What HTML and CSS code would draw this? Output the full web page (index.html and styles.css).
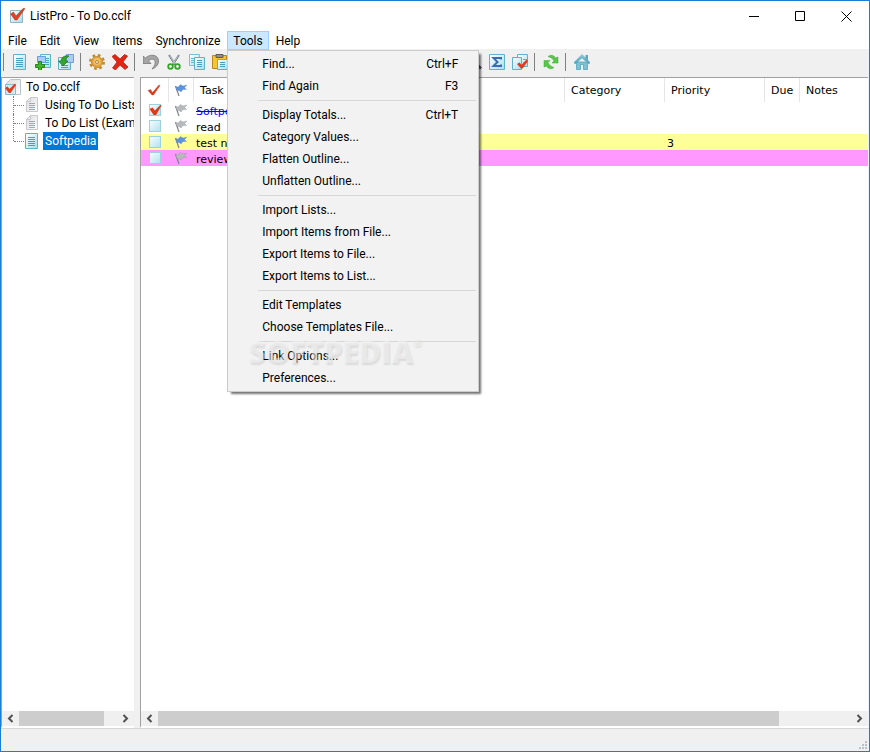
FILE: index.html
```html
<!DOCTYPE html>
<html lang="en">
<head>
  <meta charset="UTF-8">
  <title>ListPro - To Do.cclf</title>
  <link rel="stylesheet" href="styles.css">
</head>
<body>

  <!-- shared icon shapes -->
  <svg class="defs" aria-hidden="true">
    <defs>
      <linearGradient id="pageBlue" x1="0" y1="0" x2="1" y2="1">
        <stop offset="0" stop-color="#ffffff"/>
        <stop offset="1" stop-color="#a6dfee"/>
      </linearGradient>
      <linearGradient id="pageGrey" x1="0" y1="0" x2="1" y2="1">
        <stop offset="0" stop-color="#dcdcdc"/>
        <stop offset="1" stop-color="#fdfdfd"/>
      </linearGradient>
      <linearGradient id="roof" x1="0" y1="0" x2="0" y2="1">
        <stop offset="0" stop-color="#8ccbdc"/>
        <stop offset="1" stop-color="#4a9fba"/>
      </linearGradient>
      <symbol id="page" viewBox="0 0 16 16">
        <path d="M1.500.5h12v15h-12z" fill="url(#pageBlue)" stroke="#5db4c8"/>
        <path d="M4 4.500h7M4 6.500h7M4 8.500h7M4 10.500h7M4 12.500h7" stroke="#4a9fbc"/>
      </symbol>
      <symbol id="page-grey" viewBox="0 0 16 16">
        <path d="M6.500.5h7v14h-11v-10z" fill="url(#pageGrey)" stroke="#c8c8cc"/>
        <path d="M2.500 4.500h4v-4z" fill="#eee" stroke="#c8c8cc"/>
        <path d="M5 6.500h6M5 8.500h6M5 10.500h6M5 12.500h6" stroke="#9cabb0"/>
      </symbol>
      <symbol id="tick" viewBox="0 0 16 16">
        <path d="M2 8.500l2.500-1 2 3L13 3l1 .5L7.500 13H6z" fill="#e23a18" stroke="#b8391f" stroke-width=".4"/>
      </symbol>
      <symbol id="flag" viewBox="0 0 16 16">
        <path d="M2.500 4L6 14" stroke="#7f858c" stroke-width="1.200"/>
        <path d="M2.500 4.500L5 5 7.500 2.500 10 4 14 3 11.500 5.500l2 2L10 7.500l-2 2.500L6 8.500 4 9z" fill="currentColor" stroke="#5f7590" stroke-opacity=".4" stroke-width=".6"/>
      </symbol>
    </defs>
  </svg>

  <div class="window">

    <header class="titlebar">
      <svg class="icon" viewBox="0 0 16 16" aria-hidden="true">
        <path d="M1.500 2.500h12v12h-12z" fill="url(#pageBlue)" stroke="#8fb5c4"/>
        <path d="M1.500 6l3-2 2.500 4L14 .5h2L8 12H6z" fill="#e04420" stroke="#b53116" stroke-width=".5"/>
      </svg>
      <h1 class="title">ListPro - To Do.cclf</h1>
      <div class="controls">
        <button class="control" aria-label="Minimize"><svg viewBox="0 0 11 11"><path d="M0 5.500h10"/></svg></button>
        <button class="control" aria-label="Maximize"><svg viewBox="0 0 11 11"><path d="M.5.5h9v9h-9z"/></svg></button>
        <button class="control" aria-label="Close"><svg viewBox="0 0 11 11"><path d="M.5.5l10 10M10.500.5l-10 10"/></svg></button>
      </div>
    </header>

    <nav class="menubar">
      <button class="menu-btn">File</button>
      <button class="menu-btn">Edit</button>
      <button class="menu-btn">View</button>
      <button class="menu-btn">Items</button>
      <button class="menu-btn">Synchronize</button>
      <div class="menu-holder">
        <button class="menu-btn open" aria-expanded="true">Tools</button>
        <div class="dropdown" role="menu">
          <button class="entry" role="menuitem">Find...<span>Ctrl+F</span></button>
          <button class="entry" role="menuitem">Find Again<span>F3</span></button>
          <hr>
          <button class="entry" role="menuitem">Display Totals...<span>Ctrl+T</span></button>
          <button class="entry" role="menuitem">Category Values...</button>
          <button class="entry" role="menuitem">Flatten Outline...</button>
          <button class="entry" role="menuitem">Unflatten Outline...</button>
          <hr>
          <button class="entry" role="menuitem">Import Lists...</button>
          <button class="entry" role="menuitem">Import Items from File...</button>
          <button class="entry" role="menuitem">Export Items to File...</button>
          <button class="entry" role="menuitem">Export Items to List...</button>
          <hr>
          <button class="entry" role="menuitem">Edit Templates</button>
          <button class="entry" role="menuitem">Choose Templates File...</button>
          <hr>
          <button class="entry" role="menuitem">Link Options...</button>
          <button class="entry" role="menuitem">Preferences...</button>
          <div class="watermark">SOFTPEDIA<sup>®</sup></div>
        </div>
      </div>
      <button class="menu-btn">Help</button>
    </nav>

    <div class="toolbar">
      <span class="sep"></span>
      <button class="tool" aria-label="New list"><svg class="icon"><use href="#page"/></svg></button>
      <button class="tool" aria-label="Add item">
        <svg class="icon" viewBox="0 0 16 16">
          <path d="M5.500.5h10v13h-10z" fill="url(#pageBlue)" stroke="#5db4c8"/>
          <path d="M11 4.500h3M11 6.500h3M8 8.500h6M8 10.500h6" stroke="#4a9fbc"/>
          <path d="M2.500 2.500h8v6h-8z" fill="#a9cdf5" stroke="#6a9fd8"/>
          <path d="M3.500 7.500h3v3h3v3h-3v3h-3v-3h-3v-3h3z" fill="#3fb52b" stroke="#25831a"/>
        </svg>
      </button>
      <button class="tool" aria-label="Add sub item">
        <svg class="icon" viewBox="0 0 16 16">
          <path d="M.5 3.500h12v12H.5z" fill="url(#pageBlue)" stroke="#5db4c8"/>
          <path d="M3 11.500h7M3 13.500h7" stroke="#4a9fbc"/>
          <path d="M8.500.5h7v8h-7z" fill="#a9cdf5" stroke="#6a9fd8"/>
          <path d="M11 2C6 1 3 4 3 7H.5L5 12l5-5H7.500c0-2 1-3.500 3.500-5z" fill="#35a62a" stroke="#1b701a" stroke-width=".7"/>
        </svg>
      </button>
      <span class="sep"></span>
      <button class="tool" aria-label="Properties">
        <svg class="icon" viewBox="0 0 16 16">
          <circle cx="8" cy="8" r="6.500" fill="none" stroke="#c08a30" stroke-width="3" stroke-dasharray="2.600 2.500"/>
          <circle cx="8" cy="8" r="5.500" fill="#e2a63c" stroke="#c9903a"/>
          <circle cx="8" cy="7.500" r="3.500" fill="#f1c063"/>
          <circle cx="8" cy="8" r="1.500" fill="#f6efe0" stroke="#b98430"/>
        </svg>
      </button>
      <button class="tool" aria-label="Delete">
        <svg class="icon" viewBox="0 0 16 16"><path d="M0 2.500L3 .5l5 4.500L12.500.5l3 1.500L11 8l5 5-3 2.500-5-4.500-4.500 5L.5 14 5 8z" fill="#e62414" stroke="#ad160c" stroke-width=".7"/></svg>
      </button>
      <span class="sep"></span>
      <button class="tool" aria-label="Undo">
        <svg class="icon" viewBox="0 0 16 16"><path d="M0 2l2.500 2C7-.5 15.500.5 15.500 7c0 4-3 7-6.500 8 2.500-3 3.500-5 3-7.500-.5-3-4.500-3-6.500-.5L8 9.500H0z" fill="#a5a5a5" stroke="#777" stroke-width=".8"/></svg>
      </button>
      <button class="tool" aria-label="Cut">
        <svg class="icon" viewBox="0 0 16 16">
          <path d="M3 1l6.500 10M13 1L6.500 11" stroke="#6f7b82" stroke-width="2"/>
          <path d="M3.500 1.500l6 9M12.500 1.500l-6 9" stroke="#dde4e7" stroke-width=".7"/>
          <circle cx="4.500" cy="12.500" r="2.300" fill="none" stroke="#34a528" stroke-width="1.800"/>
          <circle cx="11.500" cy="12.500" r="2.300" fill="none" stroke="#34a528" stroke-width="1.800"/>
        </svg>
      </button>
      <button class="tool" aria-label="Copy">
        <svg class="icon" viewBox="0 0 16 16">
          <path d="M.5.5h10v11H.5z" fill="url(#pageBlue)" stroke="#7cc1d2"/>
          <path d="M2 4.500h4M2 6.500h4M2 8.500h4" stroke="#69b3c9"/>
          <path d="M5.500 3.500h10v12h-10z" fill="url(#pageBlue)" stroke="#5db4c8"/>
          <path d="M8 6.500h5M8 8.500h5M8 10.500h5M8 12.500h5" stroke="#4a9fbc"/>
        </svg>
      </button>
      <button class="tool" aria-label="Paste">
        <svg class="icon" viewBox="0 0 16 16">
          <path d="M.5 1.500h14v13H.5z" fill="#f4c637" stroke="#b88720"/>
          <path d="M4 .5h7v3H4z" fill="#8f8f8f" stroke="#5f5f5f"/>
          <path d="M5.500 5.500h10v10h-10z" fill="url(#pageBlue)" stroke="#5db4c8"/>
          <path d="M8 8.500h5M8 10.500h5M8 12.500h5" stroke="#4a9fbc"/>
        </svg>
      </button>
      <button class="tool search" aria-label="Find">
        <svg class="icon" viewBox="0 0 16 16"><circle cx="6" cy="6" r="4.500" fill="#d6ecf7" stroke="#66727e" stroke-width="1.500"/><path d="M10 9.500l5 5" stroke="#48525c" stroke-width="2.500"/></svg>
      </button>
      <button class="tool" aria-label="Totals">
        <svg class="icon" viewBox="0 0 16 16">
          <path d="M.5.500h15v15H.5z" fill="url(#pageBlue)" stroke="#5cb3cc"/>
          <path d="M12 5.500V4H4.500l4 4-4 4H12v-1.500" fill="none" stroke="#3d6db0" stroke-width="2"/>
        </svg>
      </button>
      <button class="tool" aria-label="Check items">
        <svg class="icon" viewBox="0 0 16 16">
          <path d="M5.500.5h10v12h-10z" fill="url(#pageBlue)" stroke="#5db4c8"/>
          <path d="M11 5.500h4M11 8.500h4" stroke="#69b3c9"/>
          <path d="M.5 3.500h9v12H.5z" fill="url(#pageBlue)" stroke="#5db4c8"/>
          <path d="M5 10l2.500-1.500L9.500 11l5-5.500L16 7l-5.500 7.500H9z" fill="#e23a18"/>
        </svg>
      </button>
      <span class="sep"></span>
      <button class="tool" aria-label="Synchronize">
        <svg class="icon" viewBox="0 0 16 16">
          <path d="M5 2.500C8 .5 11 1 12.500 4L15 3v6H9l2-2C10 4.500 8 3.500 5 2.500z" fill="#55c946" stroke="#3aa833" stroke-width=".5"/>
          <path d="M11 13.500c-3 2-6 1.500-7.500-1.500L1 13V6.500h6l-2 2c1 2.500 3 4 6 5z" fill="#55c946" stroke="#3aa833" stroke-width=".5"/>
        </svg>
      </button>
      <span class="sep"></span>
      <button class="tool" aria-label="Home">
        <svg class="icon" viewBox="0 0 16 16">
          <path d="M11.500 1h2.500v5h-2.500z" fill="#5aa9c0"/>
          <path d="M2.500 8h11v7.500h-4v-5h-3v5h-4z" fill="#7cc1d4" stroke="#58a5bc" stroke-width=".8"/>
          <path d="M8 .5l8 8-1 1.500L8 4l-7 6-1-1.500z" fill="url(#roof)" stroke="#58a5bc" stroke-width=".5"/>
        </svg>
      </button>
    </div>

    <main class="panes">

      <aside class="pane tree-pane">
        <div class="tree">
          <div class="root">
            <svg class="icon" viewBox="0 0 16 16" aria-hidden="true">
              <path d="M5.500.5h10v15H.5v-10z" fill="url(#pageGrey)" stroke="#b6c6cc"/>
              <path d="M.5 5.500h10v10H.5z" fill="#c9ecf5" stroke="#8bbccb"/>
              <path d="M0 9l2.500-1.500L4.500 10l5.500-5.500L11 6l-5.500 8H4z" fill="#e23a18"/>
            </svg>
            <span>To Do.cclf</span>
          </div>
          <ul class="lists">
            <li><svg class="icon"><use href="#page-grey"/></svg><span>Using To Do Lists</span></li>
            <li><svg class="icon"><use href="#page-grey"/></svg><span>To Do List (Exam</span></li>
            <li><svg class="icon"><use href="#page"/></svg><span class="selected">Softpedia</span></li>
          </ul>
        </div>
        <div class="scrollbar">
          <button class="arrow" aria-label="Scroll left"><svg viewBox="0 0 7 9"><path d="M5.500 1L2 4.500 5.500 8"/></svg></button>
          <div class="track"><div class="thumb" style="width: 87%"></div></div>
          <button class="arrow" aria-label="Scroll right"><svg viewBox="0 0 7 9"><path d="M1.500 1L5 4.500 1.500 8"/></svg></button>
        </div>
      </aside>

      <section class="pane list-pane">
        <div class="items">
          <table>
            <colgroup>
              <col class="col-check"><col class="col-flag"><col class="col-task"><col class="col-wide"><col class="col-wide"><col class="col-due"><col>
            </colgroup>
            <thead>
              <tr>
                <th class="mark"><svg class="icon" role="img" aria-label="Done"><use href="#tick"/></svg></th>
                <th class="mark"><svg class="icon blue" role="img" aria-label="Flag"><use href="#flag"/></svg></th>
                <th>Task</th>
                <th>Category</th>
                <th>Priority</th>
                <th>Due</th>
                <th>Notes</th>
              </tr>
            </thead>
            <tbody>
              <tr>
                <td class="mark"><input type="checkbox" aria-label="Softpedia done" checked></td>
                <td class="mark"><svg class="icon grey"><use href="#flag"/></svg></td>
                <td class="done">Softpedia</td>
                <td></td><td></td><td></td><td></td>
              </tr>
              <tr>
                <td class="mark"><input type="checkbox" aria-label="read done"></td>
                <td class="mark"><svg class="icon grey"><use href="#flag"/></svg></td>
                <td>read</td>
                <td></td><td></td><td></td><td></td>
              </tr>
              <tr class="yellow">
                <td class="mark"><input type="checkbox" aria-label="test done"></td>
                <td class="mark"><svg class="icon blue"><use href="#flag"/></svg></td>
                <td>test news</td>
                <td></td><td>3</td><td></td><td></td>
              </tr>
              <tr class="pink">
                <td class="mark"><input type="checkbox" aria-label="review done"></td>
                <td class="mark"><svg class="icon grey"><use href="#flag"/></svg></td>
                <td>review</td>
                <td></td><td></td><td></td><td></td>
              </tr>
            </tbody>
          </table>
        </div>
        <div class="scrollbar">
          <button class="arrow" aria-label="Scroll left"><svg viewBox="0 0 7 9"><path d="M5.500 1L2 4.500 5.500 8"/></svg></button>
          <div class="track"><div class="thumb" style="width: 89.6%"></div></div>
          <button class="arrow" aria-label="Scroll right"><svg viewBox="0 0 7 9"><path d="M1.500 1L5 4.500 1.500 8"/></svg></button>
        </div>
      </section>

    </main>

    <footer class="statusbar">
      <svg class="grip" viewBox="0 0 8 8" aria-hidden="true">
        <path d="M6 0h2v2H6zM3 3h2v2H3zM6 3h2v2H6zM0 6h2v2H0zM3 6h2v2H3zM6 6h2v2H6z" fill="#bfbfbf"/>
      </svg>
    </footer>

  </div>

</body>
</html>
```
FILE: styles.css
```css
* {
  box-sizing: border-box;
}

body {
  margin: 0;
  font-family: Roboto, "Open Sans", sans-serif;
  font-size: 12px;
  color: #000;
}

button {
  font: inherit;
  color: inherit;
  background: none;
  border: 0;
  padding: 0;
}

.defs {
  position: absolute;
  width: 0;
  height: 0;
}

.icon {
  width: 16px;
  height: 16px;
  flex: none;
  display: block;
}

.window {
  height: 100vh;
  display: flex;
  flex-direction: column;
  border: 1px solid #1a7fd4;
  background-color: #fff;
}

/* title bar */
.titlebar {
  display: flex;
  align-items: center;
  height: 30px;
  padding-left: 8px;
  gap: 5px;
}

.title {
  margin: 0;
  font-size: 12px;
  font-weight: normal;
}

.controls {
  display: flex;
  margin-left: auto;
}

.control {
  width: 46px;
  height: 28px;
  display: flex;
  align-items: center;
  justify-content: center;
}

.control svg {
  width: 11px;
  height: 11px;
  fill: none;
  stroke: #000;
}

/* menu bar */
.menubar {
  display: flex;
  align-items: flex-start;
  gap: 1px;
  height: 18px;
  padding-left: 1px;
}

.menu-btn {
  display: block;
  height: 19px;
  padding: 0 6px;
  line-height: 20px;
}

.menu-holder {
  position: relative;
}

.menu-btn.open {
  background-color: #cce8ff;
  box-shadow: inset 0 0 0 1px #99d1ff;
}

.dropdown {
  position: absolute;
  top: 100%;
  left: 0;
  z-index: 10;
  width: 252px;
  padding: 2px;
  border: 1px solid #ccc;
  background-color: #f2f2f2;
  box-shadow: 3px 3px 2px -1px rgba(0, 0, 0, 0.55);
}

.entry {
  display: flex;
  justify-content: space-between;
  width: 100%;
  height: 22px;
  padding: 0 18px 0 32px;
  line-height: 22px;
}

.dropdown hr {
  height: 1px;
  margin: 3px 0 3px 28px;
  border: 0;
  background-color: #d7d7d7;
}

.watermark {
  position: absolute;
  left: 20px;
  bottom: 19px;
  font-family: "Open Sans", sans-serif;
  font-size: 30px;
  font-weight: 800;
  line-height: 40px;
  color: rgba(246, 246, 246, 0.5);
  text-shadow: 1px 2px 2px rgba(0, 0, 0, 0.1);
  pointer-events: none;
}

.watermark sup {
  font-size: 10px;
  line-height: 20px;
  vertical-align: top;
}

/* toolbar */
.toolbar {
  display: flex;
  align-items: center;
  height: 28px;
  padding-bottom: 2px;
  background-color: #f0f0f0;
}

.tool {
  width: 23px;
  padding-left: 4px;
}

.sep {
  width: 8px;
  height: 18px;
  border-left: 1px solid #808080;
  margin-left: 3px;
  margin-right: -3px;
}

.sep:first-child {
  margin-left: 2px;
}

.search {
  margin-left: 231px;
}

/* panes */
.panes {
  flex: 1;
  display: flex;
  gap: 6px;
  min-height: 0;
  padding-right: 1px;
  background-color: #f0f0f0;
}

.pane {
  display: flex;
  flex-direction: column;
  min-width: 0;
  border-top: 1px solid #a0a0a0;
  border-left: 1px solid #a0a0a0;
  border-bottom: 2px solid #fff;
  background-color: #fff;
}

.tree-pane {
  width: 133px;
}

.list-pane {
  flex: 1;
}

.tree,
.items {
  flex: 1;
  overflow: hidden;
}

.tree {
  white-space: nowrap;
  line-height: 18px;
}

.root {
  display: flex;
  align-items: center;
  gap: 5px;
  height: 18px;
  padding-left: 3px;
}

.lists {
  list-style: none;
  margin: 0 0 0 11px;
  padding: 0;
}

.lists li {
  display: flex;
  align-items: center;
  height: 18px;
  border-left: 1px dotted #808080;
}

.lists li::before {
  content: "";
  flex: none;
  width: 10px;
  border-top: 1px dotted #808080;
}

.lists li:last-child {
  border-left-color: transparent;
  background: repeating-linear-gradient(#808080 0 1px, transparent 1px 2px) left top / 1px 9px no-repeat border-box;
}

.lists span {
  padding: 0 2px;
  margin-left: 3px;
}

.lists .selected {
  background-color: #0078d7;
  color: #fff;
}

/* item table */
table {
  width: 100%;
  table-layout: fixed;
  border-collapse: separate;
  border-spacing: 0;
  font-family: "DejaVu Sans", Verdana, sans-serif;
  font-size: 11px;
}

.col-check {
  width: 28px;
}

.col-flag {
  width: 25px;
}

.col-task {
  width: 371px;
}

.col-wide {
  width: 100px;
}

.col-due {
  width: 35px;
}

th {
  height: 24px;
  padding: 0 0 0 6px;
  border-right: 1px solid #e5e5e5;
  font-weight: normal;
  text-align: left;
}

th:last-child {
  border-right: 0;
}

td {
  height: 16px;
  padding: 3px 0 0 2px;
  line-height: 13px;
  white-space: nowrap;
}

th.mark,
td.mark {
  padding: 0 1px 0 0;
}

.mark .icon {
  margin: 0 auto;
}

.blue {
  color: #5b93e0;
}

.grey {
  color: #b9b9b9;
}

.done {
  color: #00f;
  text-decoration: line-through;
}

.yellow {
  background-color: #ff9;
}

.pink {
  background-color: #f9f;
}

input[type="checkbox"] {
  appearance: none;
  display: block;
  width: 12px;
  height: 12px;
  margin: 0 auto;
  border: 1px solid #9fd0de;
  background: linear-gradient(135deg, #f4fcff, #b5e3ef);
}

input[type="checkbox"]:checked::before {
  content: "";
  display: block;
  width: 12px;
  height: 10px;
  background-color: #dc3a18;
  clip-path: polygon(0 40%, 25% 25%, 45% 55%, 90% 0, 100% 5%, 55% 100%, 35% 100%);
}

/* scrollbars */
.scrollbar {
  display: flex;
  height: 15px;
  background-color: #f0f0f0;
}

.arrow {
  width: 17px;
  display: flex;
  align-items: center;
  justify-content: center;
}

.arrow svg {
  width: 7px;
  height: 9px;
  fill: none;
  stroke: #505050;
  stroke-width: 2;
}

.track {
  flex: 1;
}

.thumb {
  height: 100%;
  background-color: #cdcdcd;
}

/* status bar */
.statusbar {
  display: flex;
  align-items: flex-end;
  justify-content: flex-end;
  height: 23px;
  padding: 2px;
  border-top: 1px solid #d7d7d7;
  background-color: #f0f0f0;
}

.grip {
  width: 8px;
  height: 8px;
}
```
